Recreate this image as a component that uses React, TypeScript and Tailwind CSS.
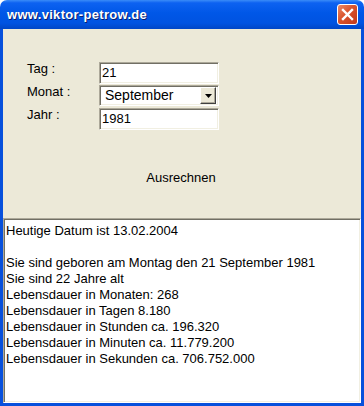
import React from "react";

const sunken =
  "border border-t-[#ACA899] border-l-[#ACA899] border-b-white border-r-white shadow-[inset_1px_1px_0_#716F64,inset_-1px_-1px_0_#F1EFE2]";

const lines = [
  "Heutige Datum ist 13.02.2004",
  "",
  "Sie sind geboren am Montag den 21 September 1981",
  "Sie sind 22 Jahre alt",
  "Lebensdauer in Monaten: 268",
  "Lebensdauer in Tagen 8.180",
  "Lebensdauer in Stunden ca. 196.320",
  "Lebensdauer in Minuten ca. 11.779.200",
  "Lebensdauer in Sekunden ca. 706.752.000",
];

const CloseButton = () => (
  <div className="w-[21px] h-[21px] rounded-[3px] border border-white bg-[linear-gradient(135deg,#EB8A67_0%,#D9532C_45%,#C2381A_100%)] grid place-items-center">
    <svg width="13" height="13" viewBox="0 0 13 13">
      <path
        d="M2 2 L11 11 M11 2 L2 11"
        stroke="white"
        strokeWidth="2.4"
        strokeLinecap="square"
      />
    </svg>
  </div>
);

const Field: React.FC<{ label: string; children: React.ReactNode; className?: string }> = ({
  label,
  children,
  className,
}) => (
  <div className={`flex items-start ${className ?? ""}`}>
    <span className="w-[72px] -mt-px leading-[15px] text-[13px] text-black">{label}</span>
    {children}
  </div>
);

export default function App() {
  return (
    <div
      className="w-[364px] h-[406px] flex flex-col"
      style={{ fontFamily: '"Liberation Sans", Arial, sans-serif' }}
    >
      {/* title bar */}
      <div className="h-[29px] shrink-0 rounded-t-[7px] bg-[linear-gradient(to_bottom,#3A8CF8_0%,#0D62F1_10%,#0057E7_45%,#0053E1_80%,#0046C6_100%)] flex items-center justify-between pl-[7px] pr-[6px]">
        <span className="text-white font-bold text-[13px] tracking-[0.3px] [text-shadow:1px_1px_0_#0A1E6A]">
          www.viktor-petrow.de
        </span>
        <CloseButton />
      </div>

      {/* body */}
      <div className="flex-1 flex flex-col bg-[#ECE9D8] border-x-[3px] border-b-[3px] border-[#0750DC]">
        <div className="pl-[24px] pt-[33px] flex flex-col">
          <Field label="Tag :">
            <div className={`w-[120px] h-[22px] bg-white flex items-center pl-[2px] text-[13px] ${sunken}`}>
              21
            </div>
          </Field>
          <Field label="Monat :" className="mt-[1px]">
            <div className={`w-[120px] h-[21px] bg-white flex items-center justify-between pl-[5px] pr-[2px] text-[14px] ${sunken}`}>
              <span>September</span>
              <div className="w-[16px] h-[17px] bg-[#ECE9D8] border border-t-white border-l-white border-b-[#404040] border-r-[#404040] shadow-[inset_-1px_-1px_0_#ACA899] grid place-items-center">
                <svg width="7" height="4" viewBox="0 0 7 4">
                  <path d="M0 0 H7 L3.5 4 Z" fill="black" />
                </svg>
              </div>
            </div>
          </Field>
          <Field label="Jahr :" className="mt-[2px]">
            <div className={`w-[120px] h-[22px] bg-white flex items-center pl-[2px] text-[13px] ${sunken}`}>
              1981
            </div>
          </Field>
        </div>

        <div className="h-[88px] flex items-center justify-center">
          <span className="text-[13px] text-black -ml-[2px] mt-[7px]">Ausrechnen</span>
        </div>

        <div className={`flex-1 bg-white px-[2px] pt-[4px] text-[13px] leading-[16px] text-black ${sunken}`}>
          {lines.map((line, i) => (
            <div key={i} className="h-[16px] whitespace-pre">
              {line}
            </div>
          ))}
        </div>
      </div>
    </div>
  );
}
